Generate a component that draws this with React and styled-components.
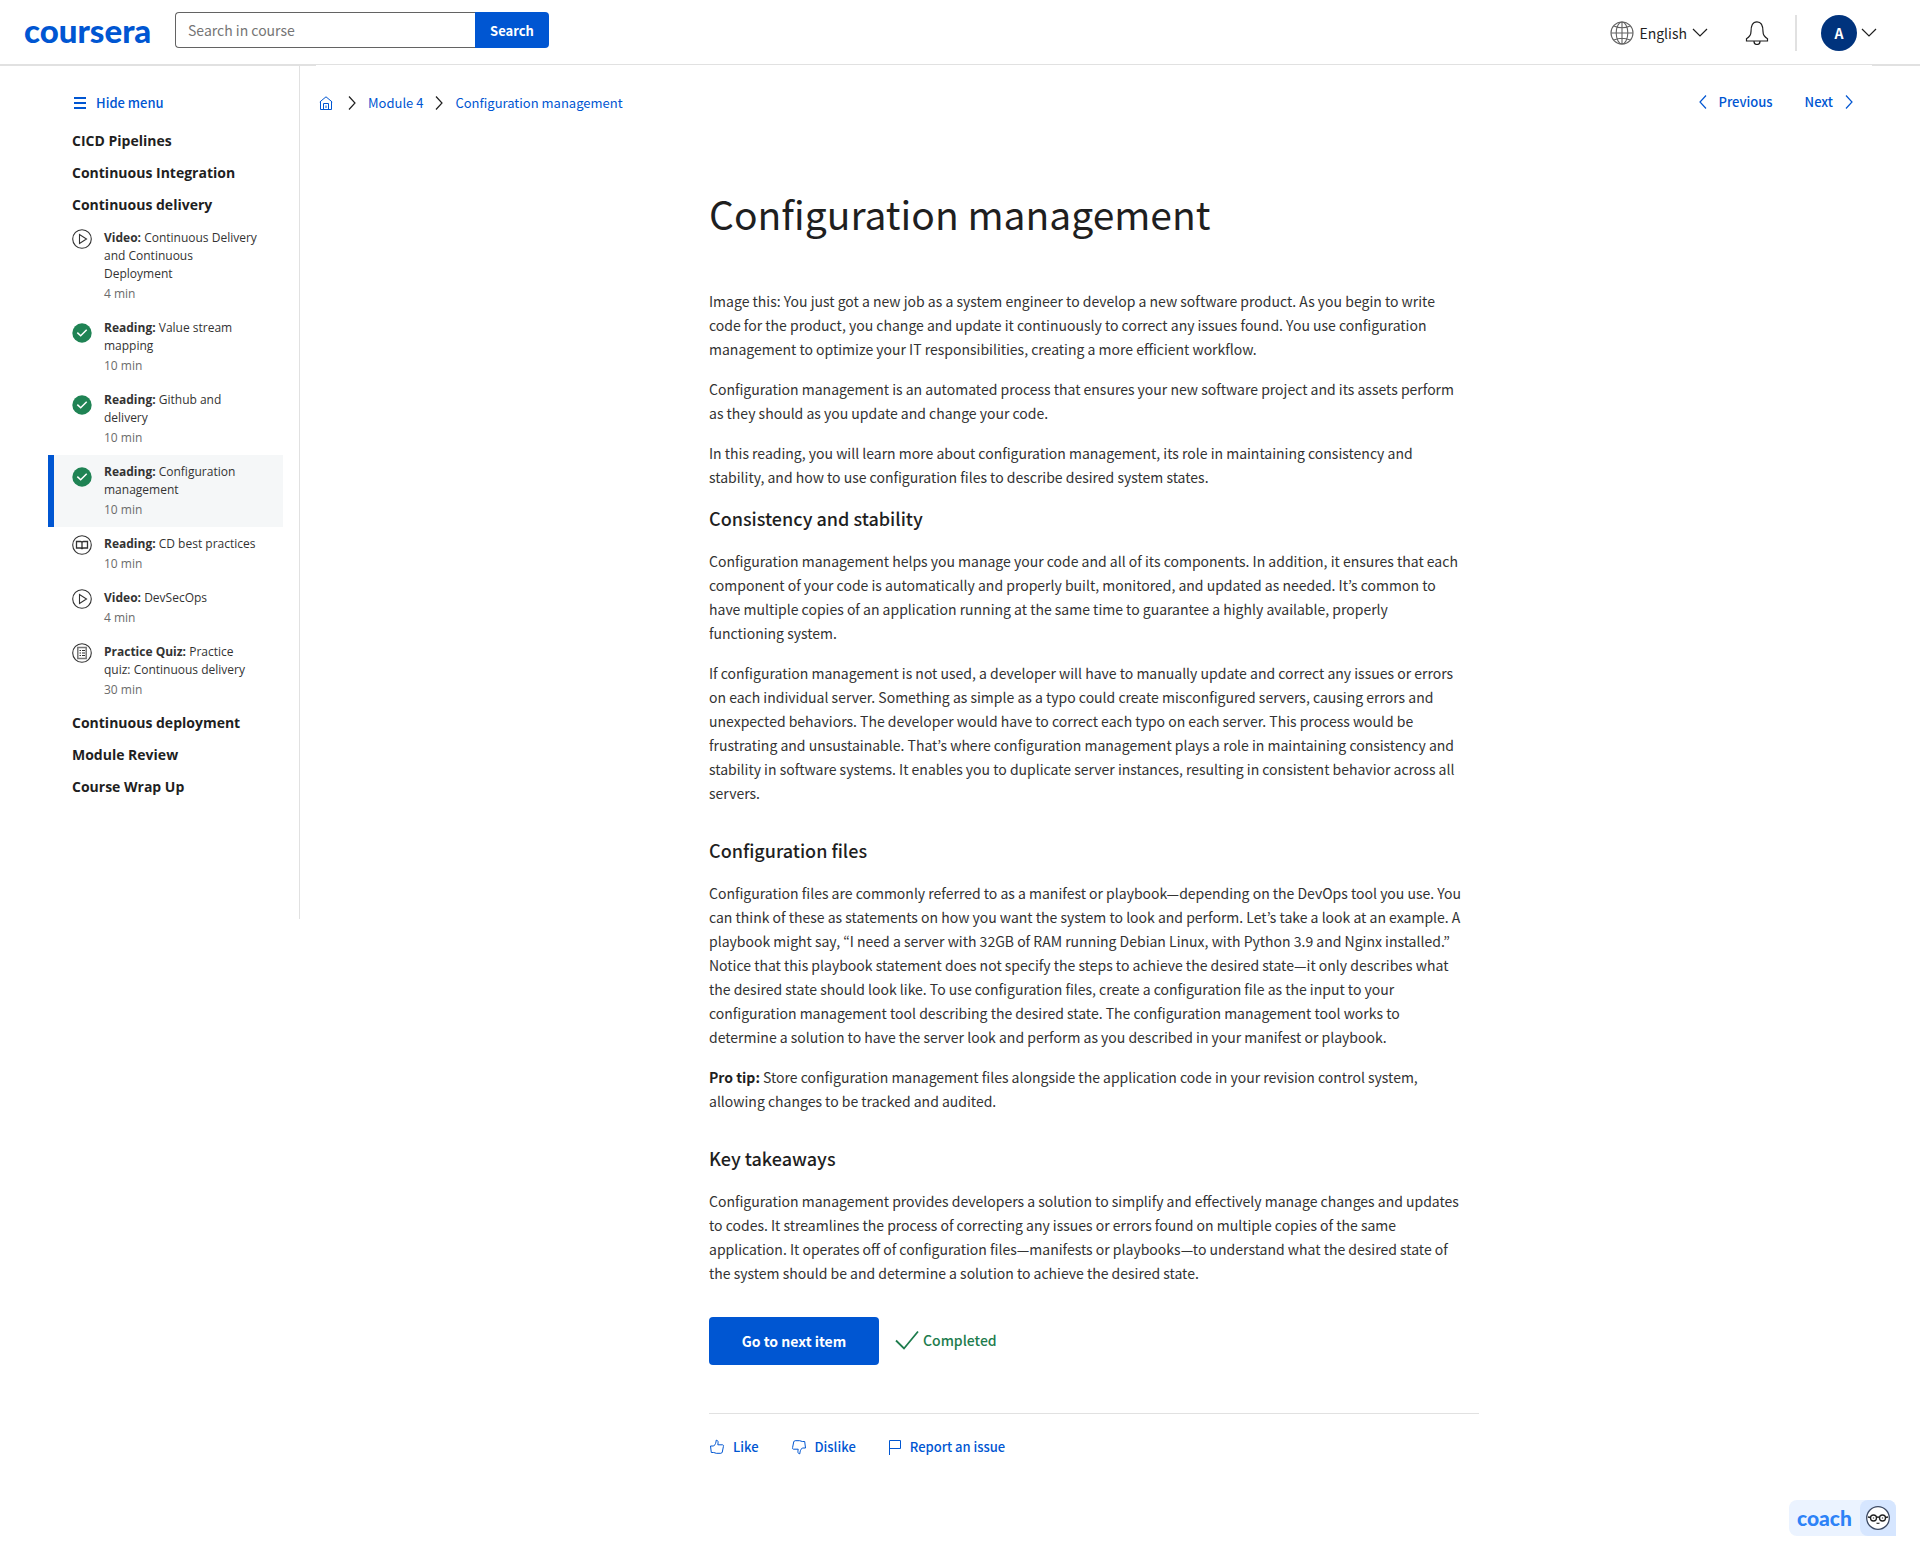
import React from 'react';
import styled, { createGlobalStyle, css } from 'styled-components';

const sans = '"Noto Sans CJK KR", "Open Sans", sans-serif';
const openSans = '"Open Sans", sans-serif';
const blue = '#0056d2';
const ink = '#1f1f1f';
const line = '#e1e1e1';

const GlobalStyle = createGlobalStyle`
  *, *::before, *::after { box-sizing: border-box; }
  body { margin: 0; background: #fff; color: ${ink}; font-family: ${sans}; font-size: 14px; line-height: 24px; }
  button, input { font-family: inherit; }
  h1, h2, p, ul, ol { margin: 0; padding: 0; }
  ul, ol { list-style: none; }
  a { color: inherit; text-decoration: none; }
  svg { display: block; flex: none; }
`;

const Header = styled.header`
  display: flex;
  align-items: center;
  height: 66px;
  padding: 0 43px 0 24px;
  border-bottom: 2px solid ${line};
`;

const Logo = styled.a`
  width: 128px;
  padding-bottom: 4px;
  color: ${blue};
  font-family: Lato, sans-serif;
  font-size: 33px;
  font-weight: 900;
  line-height: 36px;
`;

const SearchForm = styled.form`
  display: flex;
  height: 36px;
  margin: 0 auto 4px 23px;
`;

const SearchInput = styled.input`
  width: 300px;
  padding: 0 12px;
  border: 1px solid #636363;
  border-right: 0;
  border-radius: 4px 0 0 4px;
  color: ${ink};
  font-size: 14px;
  &::placeholder { color: #757575; opacity: 1; }
`;

const SearchButton = styled.button`
  width: 74px;
  padding: 0;
  border: 0;
  border-radius: 0 4px 4px 0;
  background: ${blue};
  color: #fff;
  font-size: 13px;
  font-weight: 700;
`;

const PlainButton = styled.button`
  display: flex;
  align-items: center;
  gap: ${(p) => p.$gap || 0}px;
  padding: 0;
  border: 0;
  background: none;
  color: ${(p) => p.$color || ink};
  font-size: ${(p) => p.$size || 14}px;
  font-weight: ${(p) => p.$weight || 400};
  line-height: 24px;
`;

const HeaderTools = styled.div`
  display: flex;
  align-items: center;
  padding-top: 2px;
`;

const BellButton = styled(PlainButton)`
  margin: 0 26px 0 37px;
`;

const Divider = styled.span`
  width: 2px;
  height: 36px;
  margin-right: 24px;
  background: ${line};
`;

const Avatar = styled.span`
  display: grid;
  place-items: center;
  width: 36px;
  height: 36px;
  border-radius: 50%;
  background: #00337d;
  color: #fff;
  font-size: 14px;
  font-weight: 700;
`;

const Layout = styled.div`
  display: flex;
  align-items: flex-start;
`;

const Sidebar = styled.nav`
  flex: none;
  width: 300px;
  padding: 25px 16px 116px 48px;
  border-right: 1px solid ${line};
  font-family: ${openSans};
`;

const MenuToggle = styled(PlainButton)`
  margin: 0 0 10px 26px;
  font-family: ${sans};
`;

const ModuleTitle = styled.button`
  display: block;
  width: 100%;
  padding: 0 0 0 24px;
  border: 0;
  background: none;
  color: ${ink};
  font-family: ${openSans};
  font-size: 14px;
  font-weight: 700;
  line-height: 32px;
  text-align: left;
`;

const Lesson = styled.a`
  display: flex;
  align-items: flex-start;
  gap: 12px;
  padding: 8px 24px 8px 18px;
  border-left: 6px solid transparent;
  color: #333;
  font-size: 12px;
  line-height: 18px;
  ${(p) => p.$current && css`
    border-left-color: ${blue};
    background: #f5f7f8;
  `}
  svg { margin-top: ${(p) => (p.$done ? 4 : 0)}px; }
  strong { font-weight: 700; }
`;

const Duration = styled.span`
  display: block;
  margin-top: 2px;
  color: #6b6b6b;
`;

const Main = styled.main`
  flex: 1;
  min-width: 0;
  margin: -1px 48px 0 16px;
  background: #fff;
`;

const TopBar = styled.div`
  display: flex;
  justify-content: space-between;
  align-items: center;
  height: 76px;
  padding: 0 19px 0 2px;
`;

const Crumbs = styled.ol`
  display: flex;
  align-items: center;
  gap: 12px;
  color: ${blue};
  font-size: 13px;
  li { display: flex; align-items: center; gap: 12px; }
`;

const HomeLink = styled.a`
  padding: 0 3px 0 1px;
`;

const Pager = styled.div`
  display: flex;
  gap: 32px;
  padding-bottom: 2px;
`;

const Article = styled.article`
  max-width: 770px;
  margin: 0 auto;
  padding: 44px 0 100px;
`;

const Title = styled.h1`
  margin-bottom: 48px;
  font-size: 39px;
  font-weight: 400;
  line-height: 56px;
`;

const Heading = styled.h2`
  margin: ${(p) => (p.$spaced ? 33 : 17)}px 0 19px;
  font-size: 18px;
  font-weight: 500;
  line-height: 24px;
`;

const Paragraph = styled.p`
  max-width: 755px;
  color: #333;
  & + & { margin-top: 16px; }
  strong { color: ${ink}; }
`;

const Actions = styled.div`
  display: flex;
  align-items: center;
  gap: 16px;
  margin-top: 32px;
  padding-bottom: 48px;
  border-bottom: 1px solid ${line};
`;

const NextButton = styled.button`
  width: 170px;
  height: 48px;
  border: 0;
  border-radius: 4px;
  background: ${blue};
  color: #fff;
  font-size: 14px;
  font-weight: 700;
`;

const Completed = styled.span`
  display: flex;
  align-items: center;
  gap: 4px;
  padding-bottom: 2px;
  color: #1d7c4d;
  font-weight: 500;
`;

const Feedback = styled.div`
  display: flex;
  gap: 32px;
  margin-top: 21px;
`;

const Coach = styled.button`
  position: fixed;
  right: 24px;
  bottom: 24px;
  display: flex;
  align-items: center;
  justify-content: space-between;
  width: 107px;
  height: 36px;
  padding: 0 0 0 8px;
  border: 0;
  border-radius: 8px;
  background: #ebf3ff;
  color: #2d82f7;
  font-family: Lato, sans-serif;
  font-size: 21px;
  font-weight: 900;
`;

const CoachName = styled.span`
  padding-bottom: 2px;
`;

const CoachFace = styled.span`
  display: grid;
  place-items: center;
  width: 36px;
  height: 36px;
  border-radius: 8px 8px 0 8px;
  background: #d6e6ff;
`;

const chevronShape = {
  down: { width: 16, height: 10, d: 'M1 1l7 7 7-7' },
  right: { width: 8, height: 14, d: 'M1 .5L7 7l-6 6.500' },
  left: { width: 8, height: 14, d: 'M7 .5L1 7l6 6.500' },
};

function Chevron({ dir = 'right', color = ink }) {
  const { width, height, d } = chevronShape[dir];
  return (
    <svg width={width} height={height} viewBox={`0 0 ${width} ${height}`} fill="none" stroke={color} strokeWidth="1.200">
      <path d={d} />
    </svg>
  );
}

const Globe = () => (
  <svg width="24" height="24" viewBox="0 0 24 24" fill="none" stroke="#636363" strokeWidth="1.100">
    <circle cx="12" cy="12" r="11" />
    <ellipse cx="12" cy="12" rx="5.800" ry="11" />
    <path d="M1 12h22M3.800 5q8.200 3.600 16.400 0M3.800 19q8.200-3.600 16.400 0M12 1v22" />
  </svg>
);

const Bell = () => (
  <svg width="24" height="24" viewBox="0 0 24 24" fill="none" stroke={ink} strokeWidth="1.200">
    <path d="M1.500 20v-2.300C4.500 16 6 14.500 6 10.500 6 5 7.500 .8 12 .8s6 4.200 6 9.700c0 4 1.500 5.500 4.500 7.200V20zM9 20.500a3 3 0 0 0 6 0" />
  </svg>
);

const Home = () => (
  <svg width="14" height="14" viewBox="0 0 14 14" fill="none" stroke={blue} strokeWidth="1">
    <path d="M.8 6L7 .8 13.200 6M1.500 5.500v8h11v-8M4.500 13.500v-6h5v6M7 9.500v2.500" />
  </svg>
);

const Bars = () => (
  <svg width="12" height="12" viewBox="0 0 12 12" fill={blue}>
    <path d="M0 0h12v2H0zM0 5h12v2H0zM0 10h12v2H0z" />
  </svg>
);

const lessonGlyph = {
  video: <path d="M7.500 5.500v9l7-4.500z" />,
  book: <path d="M4.500 6.500h4q1.500 0 1.500 1 0-1 1.500-1h4v6.500h-4q-1.500 0-1.500 1.200 0-1.200-1.500-1.200h-4zM10 7.500v6.500" strokeWidth="1.300" />,
  quiz: (
    <>
      <path d="M5.800 4.500h8.400v11H5.800z" stroke="#777" strokeWidth="1.500" />
      <path d="M7.500 7.500h1.500M10 7.500h3M7.500 10h1.500M10 10h3M7.500 12.500h1.500M10 12.500h3" />
    </>
  ),
};

function LessonIcon({ kind }) {
  if (kind === 'done') {
    return (
      <svg width="20" height="20" viewBox="0 0 20 20" fill="none">
        <circle cx="10" cy="10" r="9.700" fill="#1f8354" />
        <path d="M5.300 9.600l3.400 3.200 6-6" stroke="#fff" strokeWidth="1.500" />
      </svg>
    );
  }
  return (
    <svg width="20" height="20" viewBox="0 0 20 20" fill="none" stroke="#333" strokeWidth="1.100">
      <circle cx="10" cy="10" r="9.300" />
      {lessonGlyph[kind]}
    </svg>
  );
}

const Thumb = ({ down }) => (
  <svg width="16" height="16" viewBox="0 0 16 16" fill="none" stroke={blue} strokeWidth="1">
    <path
      transform={down ? 'rotate(180 8 8)' : undefined}
      d="M1.500 7h3.200C6.300 5.500 7 4 7.200 1.200c1.800 0 2.300 1.500 1.600 4.600H13.500c1 0 1.200.9.900 1.700L13.300 13c-.2.800-.7 1.300-1.500 1.300H7.300c-1 0-1.600-.8-2.600-.8H2.300z"
    />
  </svg>
);

const Flag = () => (
  <svg width="14" height="16" viewBox="0 0 14 16" fill="none" stroke={blue} strokeWidth="1">
    <path d="M1.500 16V1.500h11v8h-11" />
  </svg>
);

const Check = () => (
  <svg width="24" height="20" viewBox="0 0 24 20" fill="none" stroke="#1d7c4d" strokeWidth="1.800">
    <path d="M1 10.500l8 8L23 1.500" />
  </svg>
);

const Face = () => (
  <svg width="24" height="24" viewBox="0 0 24 24" fill="none" stroke="#222" strokeWidth="1.300">
    <circle cx="12" cy="12" r="11.300" fill="#fff" stroke="#3d4a63" />
    <circle cx="7.500" cy="12" r="3" />
    <circle cx="16.500" cy="12" r="3" />
    <path d="M10.500 11.500q1.500-1 3 0M4.500 11.500L2 11M19.500 11.500l2.500-.5M10.500 17q1.500.7 3 0" />
    <path d="M7.500 11.500v1M16.500 11.500v1" />
  </svg>
);

const lessons = [
  { kind: 'video', type: 'Video:', name: 'Continuous Delivery and Continuous Deployment', time: '4 min' },
  { kind: 'done', type: 'Reading:', name: 'Value stream mapping', time: '10 min' },
  { kind: 'done', type: 'Reading:', name: 'Github and delivery', time: '10 min' },
  { kind: 'done', type: 'Reading:', name: 'Configuration management', time: '10 min', current: true },
  { kind: 'book', type: 'Reading:', name: 'CD best practices', time: '10 min' },
  { kind: 'video', type: 'Video:', name: 'DevSecOps', time: '4 min' },
  { kind: 'quiz', type: 'Practice Quiz:', name: 'Practice quiz: Continuous delivery', time: '30 min' },
];

export default function App() {
  return (
    <>
      <GlobalStyle />
      <Header>
        <Logo href="#">coursera</Logo>
        <SearchForm role="search" onSubmit={(e) => e.preventDefault()}>
          <SearchInput type="text" aria-label="Search in course" placeholder="Search in course" />
          <SearchButton type="submit">Search</SearchButton>
        </SearchForm>
        <HeaderTools>
          <PlainButton $gap={5}><Globe />English<Chevron dir="down" /></PlainButton>
          <BellButton aria-label="Notifications"><Bell /></BellButton>
          <Divider />
          <PlainButton $gap={4}><Avatar>A</Avatar><Chevron dir="down" /></PlainButton>
        </HeaderTools>
      </Header>
      <Layout>
        <Sidebar aria-label="Course">
          <MenuToggle $gap={10} $color={blue} $size={13} $weight={500}><Bars />Hide menu</MenuToggle>
          <ModuleTitle>CICD Pipelines</ModuleTitle>
          <ModuleTitle>Continuous Integration</ModuleTitle>
          <ModuleTitle>Continuous delivery</ModuleTitle>
          <ul>
            {lessons.map((l) => (
              <li key={l.name}>
                <Lesson href="#" $done={l.kind === 'done'} $current={l.current}>
                  <LessonIcon kind={l.kind} />
                  <span>
                    <strong>{l.type}</strong> {l.name}
                    <Duration>{l.time}</Duration>
                  </span>
                </Lesson>
              </li>
            ))}
          </ul>
          <ModuleTitle>Continuous deployment</ModuleTitle>
          <ModuleTitle>Module Review</ModuleTitle>
          <ModuleTitle>Course Wrap Up</ModuleTitle>
        </Sidebar>
        <Main>
          <TopBar>
            <Crumbs>
              <li><HomeLink href="#" aria-label="Home"><Home /></HomeLink></li>
              <li><Chevron /><a href="#">Module 4</a></li>
              <li><Chevron /><a href="#">Configuration management</a></li>
            </Crumbs>
            <Pager>
              <PlainButton $gap={12} $color={blue} $size={13} $weight={500}><Chevron dir="left" color={blue} />Previous</PlainButton>
              <PlainButton $gap={12} $color={blue} $size={13} $weight={500}>Next<Chevron color={blue} /></PlainButton>
            </Pager>
          </TopBar>
          <Article>
            <Title>Configuration management</Title>
            <Paragraph>Image this: You just got a new job as a system engineer to develop a new software product. As you begin to write code for the product, you change and update it continuously to correct any issues found. You use configuration management to optimize your IT responsibilities, creating a more efficient workflow.</Paragraph>
            <Paragraph>Configuration management is an automated process that ensures your new software project and its assets perform as they should as you update and change your code.</Paragraph>
            <Paragraph>In this reading, you will learn more about configuration management, its role in maintaining consistency and stability, and how to use configuration files to describe desired system states.</Paragraph>
            <Heading>Consistency and stability</Heading>
            <Paragraph>Configuration management helps you manage your code and all of its components. In addition, it ensures that each component of your code is automatically and properly built, monitored, and updated as needed. It’s common to have multiple copies of an application running at the same time to guarantee a highly available, properly functioning system.</Paragraph>
            <Paragraph>If configuration management is not used, a developer will have to manually update and correct any issues or errors on each individual server. Something as simple as a typo could create misconfigured servers, causing errors and unexpected behaviors. The developer would have to correct each typo on each server. This process would be frustrating and unsustainable. That’s where configuration management plays a role in maintaining consistency and stability in software systems. It enables you to duplicate server instances, resulting in consistent behavior across all servers.</Paragraph>
            <Heading $spaced>Configuration files</Heading>
            <Paragraph>Configuration files are commonly referred to as a manifest or playbook—depending on the DevOps tool you use. You can think of these as statements on how you want the system to look and perform. Let’s take a look at an example. A playbook might say, “I need a server with 32GB of RAM running Debian Linux, with Python 3.9 and Nginx installed.” Notice that this playbook statement does not specify the steps to achieve the desired state—it only describes what the desired state should look like. To use configuration files, create a configuration file as the input to your configuration management tool describing the desired state. The configuration management tool works to determine a solution to have the server look and perform as you described in your manifest or playbook.</Paragraph>
            <Paragraph><strong>Pro tip:</strong> Store configuration management files alongside the application code in your revision control system, allowing changes to be tracked and audited.</Paragraph>
            <Heading $spaced>Key takeaways</Heading>
            <Paragraph>Configuration management provides developers a solution to simplify and effectively manage changes and updates to codes. It streamlines the process of correcting any issues or errors found on multiple copies of the same application. It operates off of configuration files—manifests or playbooks—to understand what the desired state of the system should be and determine a solution to achieve the desired state.</Paragraph>
            <Actions>
              <NextButton>Go to next item</NextButton>
              <Completed><Check />Completed</Completed>
            </Actions>
            <Feedback>
              <PlainButton $gap={8} $color={blue} $size={13} $weight={500}><Thumb />Like</PlainButton>
              <PlainButton $gap={8} $color={blue} $size={13} $weight={500}><Thumb down />Dislike</PlainButton>
              <PlainButton $gap={8} $color={blue} $size={13} $weight={500}><Flag />Report an issue</PlainButton>
            </Feedback>
          </Article>
        </Main>
      </Layout>
      <Coach><CoachName>coach</CoachName><CoachFace><Face /></CoachFace></Coach>
    </>
  );
}
